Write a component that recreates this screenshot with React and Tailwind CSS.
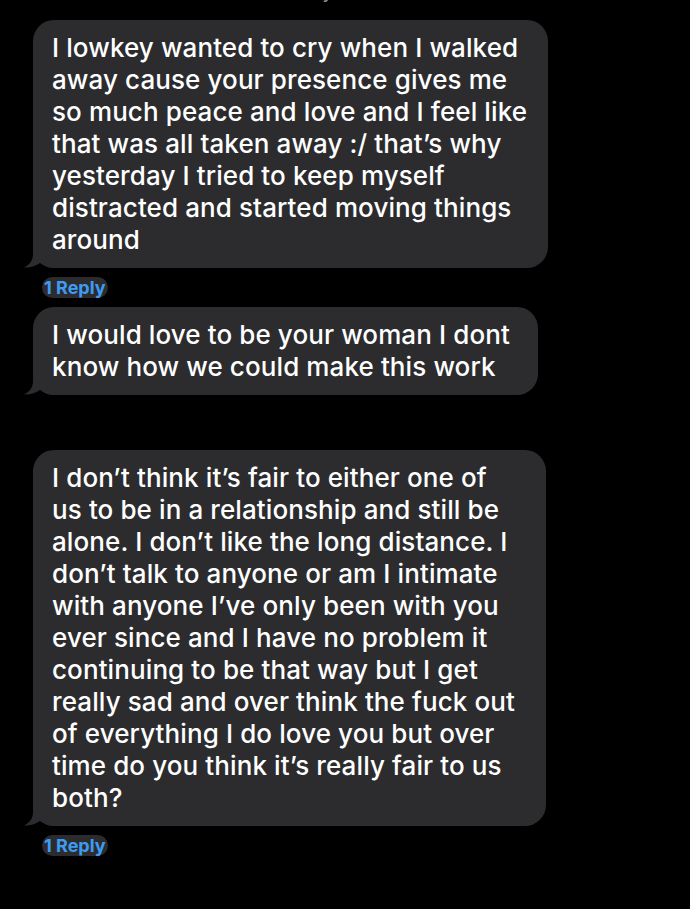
const FONT = { fontFamily: 'Inter, "Noto Sans", sans-serif' }

const MESSAGES = [
  {
    width: 'w-[515px]',
    lines: [
      'I lowkey wanted to cry when I walked',
      'away cause your presence gives me',
      'so much peace and love and I feel like',
      'that was all taken away :/ that’s why',
      'yesterday I tried to keep myself',
      'distracted and started moving things',
      'around',
    ],
    reply: true,
  },
  {
    width: 'w-[505px]',
    lines: ['I would love to be your woman I dont', 'know how we could make this work'],
    reply: false,
  },
  {
    width: 'w-[513px]',
    lines: [
      'I don’t think it’s fair to either one of',
      'us to be in a relationship and still be',
      'alone. I don’t like the long distance. I',
      'don’t talk to anyone or am I intimate',
      'with anyone I’ve only been with you',
      'ever since and I have no problem it',
      'continuing to be that way but I get',
      'really sad and over think the fuck out',
      'of everything I do love you but over',
      'time do you think it’s really fair to us',
      'both?',
    ],
    reply: true,
  },
]

function Tail() {
  return (
    <svg className="absolute bottom-0 left-[-9px]" width="30" height="22" viewBox="0 0 30 22">
      <path d="M9 0 L9 8 C9 15 5 19 0 21.5 C6 22 12 20 16 17 C19 19 23 21.5 30 22 L30 0 Z" fill="#2c2c2e" />
    </svg>
  )
}

function Bubble({ width, lines }) {
  return (
    <div className={`relative ${width} rounded-[21px] bg-[#2c2c2e] pl-[19px] py-[12px]`}>
      <Tail />
      <div className="relative text-[26px] leading-[32px] font-medium text-white whitespace-nowrap tracking-[0.1px]">
        {lines.map((l, i) => (
          <div key={i}>{l}</div>
        ))}
      </div>
    </div>
  )
}

function ReplyPill() {
  return (
    <div className="ml-[9px] mt-[9px] self-start rounded-full bg-[#2c2c2e] px-[2px] text-[18px] leading-[21px] font-bold text-[#3d9cf2]">
      1 Reply
    </div>
  )
}

export default function App() {
  return (
    <div className="h-[909px] w-[690px] overflow-hidden bg-black" style={FONT}>
      {/* timestamp cut off at the top */}
      <div className="h-[4px] overflow-hidden text-center">
        <div className="-mt-[21px] text-[20px] leading-[24px] text-[#8e8e93]">Today 9:41 PM</div>
      </div>

      <div className="flex flex-col pl-[33px] mt-[16px]">
        <Bubble {...MESSAGES[0]} />
        <ReplyPill />
        <div className="mt-[9px]">
          <Bubble {...MESSAGES[1]} />
        </div>
        <div className="mt-[55px]">
          <Bubble {...MESSAGES[2]} />
        </div>
        <ReplyPill />
      </div>
    </div>
  )
}
